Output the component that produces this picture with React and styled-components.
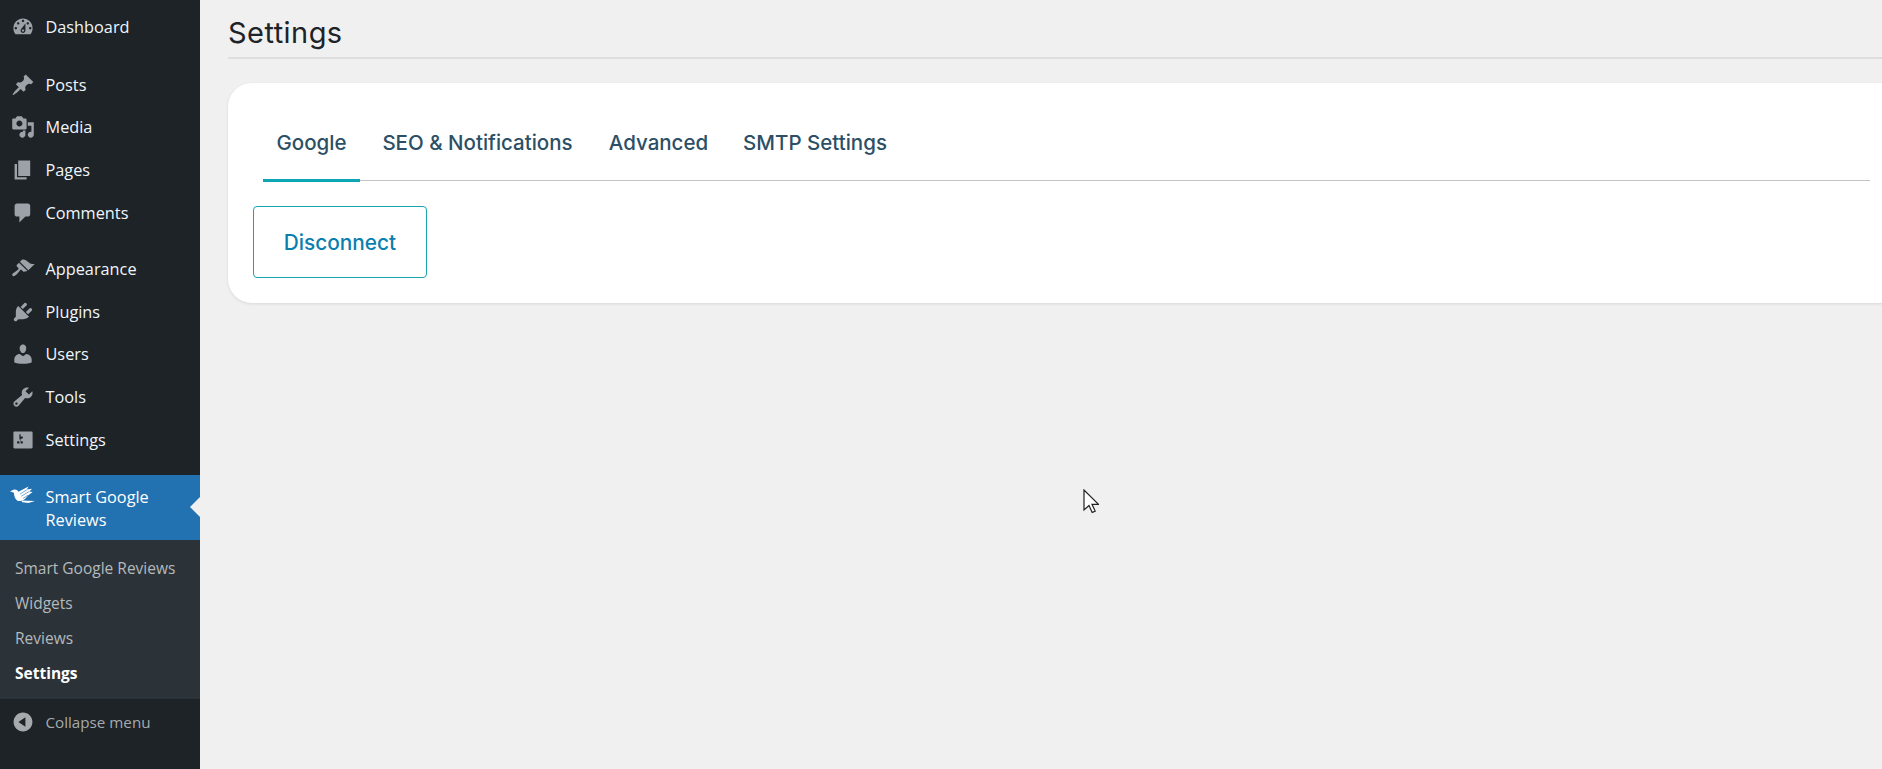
import React from 'react';
import styled, { createGlobalStyle } from 'styled-components';

const GlobalStyle = createGlobalStyle`
    html, body {
        margin: 0;
        padding: 0;
        height: 100%;
        background-color: #f0f0f0;
    }

    #root {
        height: 100%;
    }
`;

const Page = styled.div`
    position: relative;
    display: flex;
    height: 769px;
    overflow: hidden;
    background-color: #f0f0f0;
`;

const Sidebar = styled.nav`
    flex: 0 0 200px;
    background-color: #1d2327;
    font-family: 'Open Sans', sans-serif;
    display: flex;
    flex-direction: column;
    padding-top: 6px;
`;

const MenuGroup = styled.ul`
    list-style: none;
    margin: 0 0 14px 0;
    padding: 0;

    &:first-child {
        margin-bottom: 15px;
    }
`;

const MenuItem = styled.li`
    height: 42.6px;
    display: flex;
    align-items: center;
    color: #f0f6fc;
    font-size: 16.3px;

    svg {
        flex: 0 0 24px;
        width: 24px;
        height: 24px;
        margin: 0 10.5px 0 11px;
        fill: #9ca2a7;
    }
`;

const ActiveItem = styled.div`
    position: relative;
    height: 65px;
    box-sizing: border-box;
    padding-top: 11px;
    display: flex;
    align-items: flex-start;
    background-color: #2271b1;
    color: #fff;
    font-size: 16.3px;
    line-height: 23px;

    svg {
        flex: 0 0 24px;
        width: 24px;
        height: 24px;
        margin: -2.5px 10.5px 0 11px;
        fill: #fff;
        overflow: visible;
    }

    &::after {
        content: '';
        position: absolute;
        right: 0;
        top: 50%;
        margin-top: -10px;
        border: 10px solid transparent;
        border-right-color: #f0f0f0;
        border-left-width: 0;
    }
`;

const SubMenu = styled.ul`
    list-style: none;
    margin: 0;
    padding: 10px 0 8.5px 0;
    background-color: #2c3338;
`;

const SubItem = styled.li`
    height: 35.2px;
    display: flex;
    align-items: center;
    padding-left: 15px;
    font-size: 15.5px;
    color: ${props => props.$current ? '#fff' : '#b4b9be'};
    font-weight: ${props => props.$current ? 700 : 400};
`;

const Collapse = styled.div`
    height: 46px;
    display: flex;
    align-items: center;
    color: #a7aaad;
    font-size: 15.2px;

    svg {
        flex: 0 0 24px;
        width: 24px;
        height: 24px;
        margin: 0 10.5px 0 11px;
        fill: #a7aaad;
    }
`;

const Main = styled.main`
    flex: 1;
    min-width: 0;
    padding-left: 28px;
    display: flex;
    flex-direction: column;
`;

const Title = styled.h1`
    margin: 0;
    height: 59px;
    box-sizing: border-box;
    padding-top: 13px;
    font-family: 'Inter', sans-serif;
    font-size: 29px;
    line-height: 40px;
    font-weight: 400;
    letter-spacing: 0.45px;
    color: #1d2327;
    border-bottom: 2px solid #dedede;
`;

const Card = styled.section`
    margin: 24px -20px 0 0;
    height: 220px;
    box-sizing: border-box;
    background-color: #fff;
    border-radius: 24px;
    box-shadow: 0 1px 3px rgba(0, 0, 0, 0.1);
    padding: 0 32px 0 25px;
`;

const Tabs = styled.div`
    height: 97px;
    margin-left: 10px;
    display: flex;
    align-items: flex-end;
    gap: 11px;
    border-bottom: 1px solid #c3c4c7;
`;

const Tab = styled.div`
    width: ${props => props.$width}px;
    height: 60px;
    box-sizing: border-box;
    margin-bottom: -2px;
    text-align: center;
    white-space: nowrap;
    font-family: 'Inter', sans-serif;
    font-size: 20.5px;
    font-weight: 500;
    line-height: 41px;
    color: #2c4f66;
    border-bottom: 3px solid ${props => props.$active ? '#0da6b4' : 'transparent'};
`;

const Disconnect = styled.button`
    display: block;
    margin-top: 25px;
    width: 174px;
    height: 72px;
    background: #fff;
    border: 1px solid #18a3ad;
    border-radius: 4px;
    font-family: 'Inter', sans-serif;
    font-size: 20.8px;
    font-weight: 500;
    color: #0a7fad;
`;

const Cursor = styled.svg`
    position: absolute;
    left: 1083px;
    top: 489px;
    width: 16px;
    height: 25px;
`;

const icons = {
    dashboard: 'M3.76 16h12.48c1.1-1.37 1.76-3.11 1.76-5 0-4.42-3.58-8-8-8s-8 3.58-8 8c0 1.89.66 3.63 1.76 5zM10 4c.55 0 1 .45 1 1s-.45 1-1 1-1-.45-1-1 .45-1 1-1zM6 6c.55 0 1 .45 1 1s-.45 1-1 1-1-.45-1-1 .45-1 1-1zm8 0c.55 0 1 .45 1 1s-.45 1-1 1-1-.45-1-1 .45-1 1-1zm-5.37 5.55L12 7v6c0 1.1-.9 2-2 2s-2-.9-2-2c0-.57.24-1.08.63-1.45zM4 10c.55 0 1 .45 1 1s-.45 1-1 1-1-.45-1-1 .45-1 1-1zm12 0c.55 0 1 .45 1 1s-.45 1-1 1-1-.45-1-1 .45-1 1-1zm-5 3c0-.55-.45-1-1-1s-1 .45-1 1 .45 1 1 1 1-.45 1-1z',
    posts: 'M10.44 3.02l1.82-1.82 6.36 6.35-1.83 1.82c-1.05-.68-2.48-.57-3.41.36l-.75.75c-.92.93-1.04 2.35-.35 3.41l-1.83 1.82-2.41-2.41-2.8 2.79c-.42.42-3.38 2.71-3.8 2.29s1.86-3.39 2.28-3.81l2.79-2.79L4.1 9.36l1.83-1.82c1.05.69 2.48.57 3.4-.36l.75-.75c.93-.92 1.05-2.35.36-3.41z',
    media: 'M13 11V4c0-.55-.45-1-1-1h-1.67L9 1H5L3.67 3H2c-.55 0-1 .45-1 1v7c0 .55.45 1 1 1h10c.55 0 1-.45 1-1zM7 4.5c1.38 0 2.5 1.12 2.5 2.5S8.38 9.5 7 9.5 4.5 8.38 4.5 7 5.62 4.5 7 4.5zM14 6h5v10.5c0 1.38-1.12 2.5-2.5 2.5S14 17.88 14 16.5s1.12-2.5 2.5-2.5c.17 0 .34.02.5.05V9h-3V6zm-4 8.05V13h2v3.5c0 1.38-1.12 2.5-2.5 2.5S7 17.88 7 16.5 8.12 14 9.5 14c.17 0 .34.02.5.05z',
    pages: 'M6 15V2h10v13H6zm-1 1h8v2H3V5h2v11z',
    comments: 'M5 2h9c1.1 0 2 .9 2 2v7c0 1.1-.9 2-2 2h-2l-5 5v-5H5c-1.1 0-2-.9-2-2V4c0-1.1.9-2 2-2z',
    appearance: 'M14.48 11.06L7.41 3.99l1.5-1.5c.5-.56 2.3-.47 3.51.32 1.21.8 1.43 1.28 2.91 2.1 1.18.64 2.45 1.26 4.45.85zm-.71.71L6.7 4.7 4.93 6.47c-.39.39-.39 1.02 0 1.41l1.06 1.06c.39.39.39 1.03 0 1.42-.6.6-1.43 1.11-2.21 1.69-.35.26-.7.53-1.01.84C1.43 13.23.4 14.85 1.27 15.72c.87.87 2.49-.16 3.83-1.5.31-.31.58-.66.84-1.01.58-.78 1.09-1.61 1.69-2.21.39-.39 1.03-.39 1.42 0l1.06 1.06c.39.39 1.02.39 1.41 0z',
    plugins: 'M13.11 4.36L9.87 7.6 8 5.73l3.24-3.24c.35-.34 1.05-.2 1.56.32.52.51.66 1.21.31 1.55zm-8 1.77l.91-1.12 9.01 9.01-1.19.84c-.71.71-2.63 1.16-3.82 1.16H6.14L4.9 17.26c-.59.59-1.54.59-2.12 0-.59-.58-.59-1.53 0-2.12l1.24-1.24v-3.88c0-1.13.4-3.19 1.09-3.89zm7.26 3.97l3.24-3.24c.34-.35 1.04-.21 1.55.31.52.51.66 1.21.31 1.55l-3.24 3.25z',
    users: 'M10 9.25c-2.27 0-2.73-3.44-2.73-3.44C7 4.02 7.82 2 9.97 2c2.16 0 2.98 2.02 2.71 3.81 0 0-.41 3.44-2.68 3.44zm0 2.57L12.72 10c2.39 0 4.52 2.33 4.52 4.53v2.49s-3.65 1.13-7.24 1.13c-3.65 0-7.24-1.13-7.24-1.13v-2.49c0-2.25 1.94-4.48 4.47-4.48z',
    tools: 'M16.68 9.77c-1.34 1.34-3.3 1.67-4.95.99l-5.41 6.52c-.99.99-2.59.99-3.58 0s-.99-2.59 0-3.57l6.52-5.42c-.68-1.65-.35-3.61.99-4.95 1.28-1.28 3.12-1.62 4.72-1.06l-2.89 2.89 2.82 2.82 2.86-2.87c.53 1.58.18 3.39-1.08 4.65zM3.81 16.21c.4.39 1.04.39 1.43 0 .4-.4.4-1.04 0-1.43-.39-.4-1.03-.4-1.43 0-.39.39-.39 1.03 0 1.43z',
    settings: 'M18 16V4c0-.55-.45-1-1-1H3c-.55 0-1 .45-1 1v12c0 .55.45 1 1 1h13.99c.55 0 1.01-.45 1.01-1zM8 11h1c.55 0 1 .45 1 1s-.45 1-1 1H8v1.5c0 .28-.22.5-.5.5s-.5-.22-.5-.5V13H6c-.55 0-1-.45-1-1s.45-1 1-1h1V5.5c0-.28.22-.5.5-.5s.5.22.5.5V7h1c.55 0 1 .45 1 1s-.45 1-1 1h-1v5.5c0 .28-.22.5-.5.5s-.5-.22-.5-.5V9z',
    collapse: 'M10 2.16c4.33 0 7.84 3.51 7.84 7.84s-3.51 7.84-7.84 7.84S2.16 14.33 2.16 10 5.71 2.16 10 2.16zm2 11.72V6.12L6.18 9.97z',
};

const Icon = ({ name }) => (
    <svg viewBox="0 0 20 20"><path d={icons[name]} /></svg>
);

// plugin logo, a bird with a fanned wing
const BirdIcon = () => (
    <svg viewBox="0 0 20 20">
        <path d="M-.8 6.9 2.6 5.5C4.2 5.2 5.4 6 6.2 7.2L14.6 3 13.2 5.4 17.6 4.7 15.2 7.1 18 7.6 14.4 10.2 12.4 12.6C11 14.4 8.5 15.4 6 14.9 3.6 14.4 2.6 11 2.4 8.2Z" />
        <path d="M8.4 14.6 20 15 14.5 16.6 9.5 16Z" />
        <path d="M7.6 9.2 13.2 5.6M8.6 11 15 7.2M10 12.8 14.2 10.2" fill="none" stroke="#2271b1" strokeWidth=".5" />
    </svg>
);

const topItems = [['dashboard', 'Dashboard']];
const contentItems = [['posts', 'Posts'], ['media', 'Media'], ['pages', 'Pages'], ['comments', 'Comments']];
const adminItems = [['appearance', 'Appearance'], ['plugins', 'Plugins'], ['users', 'Users'], ['tools', 'Tools'], ['settings', 'Settings']];

const renderItems = (items) => (
    <MenuGroup>
        {items.map(([icon, label]) => (
            <MenuItem key={label}><Icon name={icon} />{label}</MenuItem>
        ))}
    </MenuGroup>
);

const App = () => {
    return (
        <Page>
            <GlobalStyle />
            <Sidebar>
                {renderItems(topItems)}
                {renderItems(contentItems)}
                {renderItems(adminItems)}
                <ActiveItem>
                    <BirdIcon />
                    <span>Smart Google<br />Reviews</span>
                </ActiveItem>
                <SubMenu>
                    <SubItem>Smart Google Reviews</SubItem>
                    <SubItem>Widgets</SubItem>
                    <SubItem>Reviews</SubItem>
                    <SubItem $current>Settings</SubItem>
                </SubMenu>
                <Collapse><Icon name="collapse" />Collapse menu</Collapse>
            </Sidebar>
            <Main>
                <Title>Settings</Title>
                <Card>
                    <Tabs>
                        <Tab $active $width={97}>Google</Tab>
                        <Tab $width={213}>SEO &amp; Notifications</Tab>
                        <Tab $width={127}>Advanced</Tab>
                        <Tab $width={164}>SMTP Settings</Tab>
                    </Tabs>
                    <Disconnect>Disconnect</Disconnect>
                </Card>
            </Main>
            <Cursor viewBox="0 0 16 25">
                <path d="M1 1v20l5-4.5 3.2 7 3-1.4-3.2-6.8H15.5z" fill="#fff" stroke="#222" strokeWidth="1.2" />
            </Cursor>
        </Page>
    );
};

export default App;
